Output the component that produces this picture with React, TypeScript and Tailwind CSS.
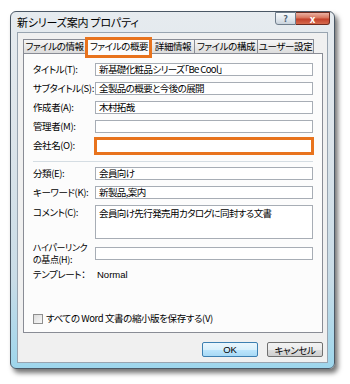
const jp = "font-['Noto_Sans_CJK_JP','Noto_Sans',sans-serif] [font-feature-settings:'palt']";
const sm = "text-[9.5px] tracking-[-0.4px]";

const Field = ({ value = "", hl = false, tall = false }: { value?: string; hl?: boolean; tall?: boolean }) => {
  if (hl) {
    return <div className="flex-1 h-[18px] -mx-[1px] border-[3px] border-[#e8731d] bg-white" />;
  }
  return (
    <div
      className={`flex-1 border border-[#a7adb5] bg-white pl-[3px] text-[9.5px] tracking-[-0.6px] leading-[11px] text-black whitespace-nowrap ${
        tall ? "h-[34px] pt-[2px]" : "h-[13px] flex items-center"
      }`}
    >
      {value}
    </div>
  );
};

const Row = ({ label, value, hl }: { label: string; value?: string; hl?: boolean }) => (
  <div className="flex items-center h-[13px]">
    <div className={`w-[62px] ${sm} leading-[11px] whitespace-nowrap`}>{label}</div>
    <Field value={value} hl={hl} />
  </div>
);

const tabs = [
  { name: "ファイルの情報", w: "w-[63px]" },
  { name: "ファイルの概要", w: "w-[66px]", active: true },
  { name: "詳細情報", w: "w-[43px]" },
  { name: "ファイルの構成", w: "w-[63px]" },
  { name: "ユーザー設定", w: "w-[56px]" },
];

export default function App() {
  return (
    <div className={`w-[350px] h-[384px] bg-white pt-[11px] pl-[10px] text-black ${jp}`}>
      {/* window */}
      <div className="w-[325px] h-[358px] rounded-[6px] border border-[#4b5866] bg-[linear-gradient(180deg,#e6ebef_0%,#dce4ea_35%,#c9dce7_75%,#9ed6ec_100%)] shadow-[3px_4px_5px_rgba(0,0,0,0.55)] flex flex-col pl-[6px] pr-[6px] pb-[5px]">
        {/* title bar */}
        <div className="h-[20px] flex items-start justify-between">
          <div className="pt-[4px] text-[11px] leading-[13px] tracking-[-0.2px]">新シリーズ案内 プロパティ</div>
          <div className="flex mr-[-2px]">
            <div className="w-[21px] h-[13px] border border-[#6f7d8b] rounded-bl-[3px] bg-[linear-gradient(180deg,#f7f9fb_0%,#e3e9ef_50%,#c9d3dc_100%)] flex items-center justify-center text-[9px] leading-[9px] font-bold text-[#4f6072]">
              ?
            </div>
            <div className="w-[34px] h-[13px] border border-l-0 border-[#6d2b1f] rounded-br-[3px] bg-[linear-gradient(180deg,#eab1a3_0%,#d8735a_45%,#c2402a_55%,#d66a4d_100%)] flex items-center justify-center text-[10px] leading-[10px] font-bold text-white">
              x
            </div>
          </div>
        </div>

        {/* client */}
        <div className="flex-1 bg-[#f0f0f0] border border-[#98a4b0] pl-[5px] pr-[4px] pt-[4px] pb-[5px] flex flex-col">
          {/* tabs */}
          <div className="relative flex items-end h-[16px] z-10">
            {tabs.map((t) =>
              t.active ? (
                <div
                  key={t.name}
                  className={`${t.w} h-[17px] -mb-[1px] border border-b-0 border-[#898c95] bg-[#fcfcfc] ${sm} leading-[16px] text-center whitespace-nowrap`}
                >
                  {t.name}
                </div>
              ) : (
                <div
                  key={t.name}
                  className={`${t.w} h-[14px] border border-b-0 border-l-0 first:border-l border-[#898c95] bg-[linear-gradient(180deg,#f6f6f6_0%,#e9e9e9_50%,#dcdcdc_100%)] ${sm} leading-[13px] text-center whitespace-nowrap`}
                >
                  {t.name}
                </div>
              )
            )}
            <div className="absolute left-[62px] top-0 w-[67px] h-[21px] border-[3px] border-[#e8731d]" />
          </div>

          {/* panel */}
          <div className="h-[280px] border border-[#898c95] bg-[#fcfcfc] pl-[9px] pr-[9px] pt-[9px] pb-[8px] flex flex-col">
            <div className="flex flex-col gap-[6px]">
              <Row label="タイトル(T):" value="新基礎化粧品シリーズ「Be Cool」" />
              <Row label="サブタイトル(S):" value="全製品の概要と今後の展開" />
              <Row label="作成者(A):" value="木村拓哉" />
              <Row label="管理者(M):" />
              <Row label="会社名(O):" hl />
            </div>
            <div className="mt-[9px] h-[1px] bg-[#d5dde3]" />
            <div className="mt-[5px] flex flex-col gap-[6px]">
              <Row label="分類(E):" value="会員向け" />
              <Row label="キーワード(K):" value="新製品,案内" />
              <div className="flex items-start">
                <div className={`w-[62px] pt-[2px] ${sm} leading-[11px]`}>コメント(C):</div>
                <Field value="会員向け先行発売用カタログに同封する文書" tall />
              </div>
              <div className="flex items-center h-[14px] mt-[1px]">
                <div className="w-[62px] text-[9px] tracking-[-0.4px] leading-[12px] whitespace-nowrap pt-[2px]">
                  <div>ハイパーリンク</div>
                  <div>の基点(H):</div>
                </div>
                <Field />
              </div>
              <div className="flex items-center h-[12px] mt-[2px]">
                <div className={`w-[64px] ${sm} leading-[11px]`}>テンプレート：</div>
                <div className="text-[9.5px] leading-[11px] font-['Liberation_Sans',sans-serif]">Normal</div>
              </div>
            </div>
            <div className="flex-1" />
            <div className="flex items-center gap-[3px]">
              <div className="w-[10px] h-[10px] border border-[#8f8f8f] bg-[linear-gradient(135deg,#dcdcdc_0%,#f8f8f8_100%)]" />
              <div className={`${sm} leading-[11px]`}>すべての Word 文書の縮小版を保存する(V)</div>
            </div>
          </div>

          {/* buttons */}
          <div className="flex-1" />
          <div className="flex justify-end gap-[9px]">
            <div className="w-[56px] h-[15px] rounded-[2px] border border-[#3c7fb1] bg-[linear-gradient(180deg,#eaf6fd_0%,#d9f0fc_50%,#bee6fd_51%,#a7d9f5_100%)] flex items-center justify-center text-[9.5px] leading-[10px] font-['Liberation_Sans',sans-serif]">
              OK
            </div>
            <div className={`w-[56px] h-[15px] rounded-[2px] border border-[#707070] bg-[linear-gradient(180deg,#f2f2f2_0%,#ebebeb_50%,#dddddd_51%,#cfcfcf_100%)] flex items-center justify-center ${sm} leading-[10px]`}>
              キャンセル
            </div>
          </div>
        </div>
      </div>
    </div>
  );
}
